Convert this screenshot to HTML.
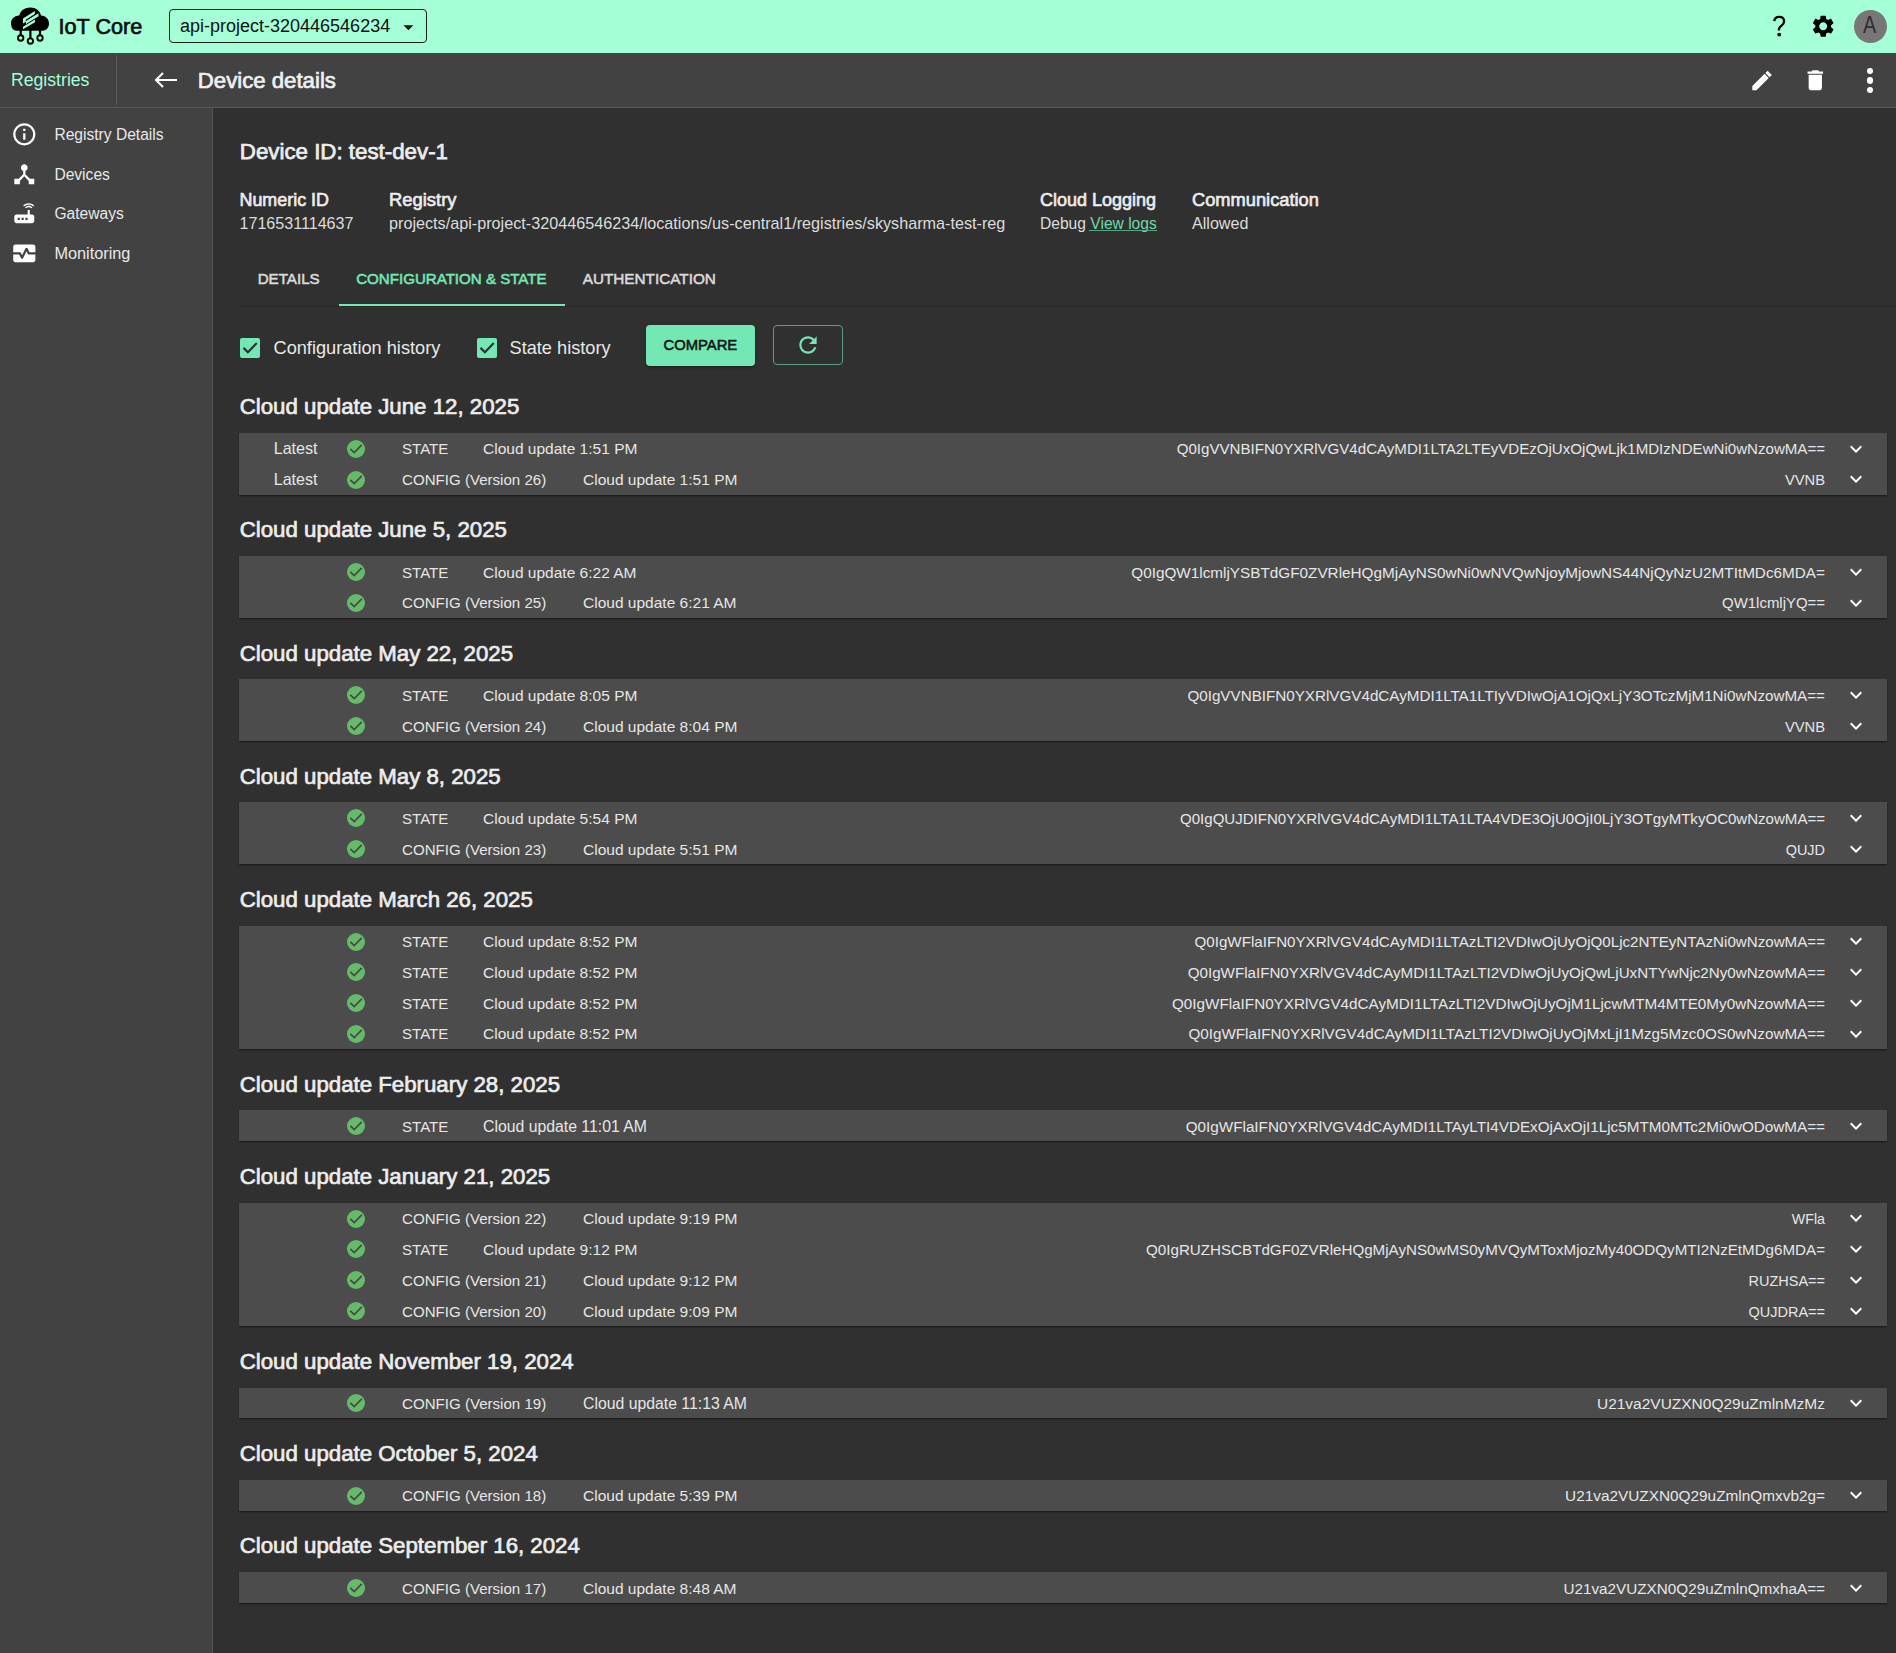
<!DOCTYPE html>
<html><head><meta charset="utf-8"><style>
html,body{margin:0;padding:0;}
body{width:1896px;height:1653px;overflow:hidden;background:#303030;position:relative;font-family:"Liberation Sans",sans-serif;}
.t{position:absolute;white-space:nowrap;}
.panel{position:absolute;left:239px;width:1648px;background:#4c4c4c;box-shadow:0 2px 1px -1px rgba(0,0,0,.2),0 1px 1px 0 rgba(0,0,0,.14),0 1px 3px 0 rgba(0,0,0,.12);}
.ok{position:absolute;left:347px;width:18px;height:18px;border-radius:50%;background:#66bb6a;}
.ok svg{display:block}
.chev{position:absolute;left:1844px;}
</style></head><body>
<div style="position:absolute;left:0;top:0;width:1896px;height:53px;background:#a5ffd7"></div><svg style="position:absolute;left:0;top:0" width="60" height="52" viewBox="0 0 60 52">
<path d="M16.5 30.7 C12.5 30.7 11 27 11 23.6 C11 19.3 14 15.6 19.3 15.6 C20.5 10.5 25 7.6 30.4 7.6 C36 7.6 40 11 41 15.6 C46 15.6 49 19.5 49 23.6 C49 27.5 46.5 30.7 42.7 30.7 Z" fill="#000"/>
<path d="M23 18.5 L34.8 11 L34.8 14 L25.8 19.8 L25.8 22 L23 23.5 Z M26 21 L38.5 13.2 L38.5 16.3 L26 24 Z M23 26.8 L35 19.5 L35 22.3 L23 29.2 Z" fill="#a5ffd7"/>
<path d="M20.7 30 V35 M30.4 30 V38 M40 30 V35" stroke="#000" stroke-width="2.2"/>
<circle cx="20.7" cy="38" r="2.7" fill="none" stroke="#000" stroke-width="1.9"/>
<circle cx="30.4" cy="41.1" r="2.7" fill="none" stroke="#000" stroke-width="1.9"/>
<circle cx="40" cy="38" r="2.7" fill="none" stroke="#000" stroke-width="1.9"/>
</svg><div class="t" style="left:58.6px;top:14px;font-size:21.6px;line-height:25px;font-weight:400;color:#111;-webkit-text-stroke:0.7px currentColor;">IoT Core</div>
<div style="position:absolute;left:169px;top:9px;width:256px;height:32px;border:1px solid #1d1d1d;border-radius:4px"></div><div class="t" style="left:180px;top:16px;font-size:18px;line-height:20px;font-weight:400;color:#111;">api-project-320446546234</div>
<svg style="position:absolute;left:403px;top:25px" width="11" height="6" viewBox="0 0 11 6"><path d="M0.5 0.3 L10.3 0.3 L5.4 5.2Z" fill="#111"/></svg><svg style="position:absolute;left:1766px;top:10px" width="26" height="30" viewBox="0 0 26 30"><path d="M8.2 11.2 C8.6 8.4 10.6 6.8 13.3 6.8 C16.2 6.8 18.1 8.7 18.1 11.4 C18.1 14 16 15.3 14.4 16.7 C13 17.9 12.8 19 12.8 20.5" fill="none" stroke="#000" stroke-width="2.3"/><circle cx="13.2" cy="24.6" r="1.9" fill="#000"/></svg><svg style="position:absolute;left:1810px;top:13px" width="26.4" height="26.4" viewBox="0 0 24 24"><path d="M19.14 12.94c.04-.3.06-.61.06-.94 0-.32-.02-.64-.07-.94l2.03-1.58c.18-.14.23-.41.12-.61l-1.92-3.32c-.12-.22-.37-.29-.59-.22l-2.39.96c-.5-.38-1.03-.7-1.62-.94l-.36-2.54c-.04-.24-.24-.41-.48-.41h-3.84c-.24 0-.43.17-.47.41l-.36 2.54c-.59.24-1.13.57-1.62.94l-2.39-.96c-.22-.08-.47 0-.59.22L2.74 8.87c-.12.21-.08.47.12.61l2.03 1.58c-.05.3-.09.63-.09.94s.02.64.07.94l-2.03 1.58c-.18.14-.23.41-.12.61l1.92 3.32c.12.22.37.29.59.22l2.39-.96c.5.38 1.03.7 1.62.94l.36 2.54c.05.24.24.41.48.41h3.84c.24 0 .44-.17.47-.41l.36-2.54c.59-.24 1.13-.56 1.62-.94l2.39.96c.22.08.47 0 .59-.22l1.92-3.32c.12-.22.07-.47-.12-.61l-2.01-1.58zM12 15.6c-1.98 0-3.6-1.62-3.6-3.6s1.62-3.6 3.6-3.6 3.6 1.62 3.6 3.6-1.62 3.6-3.6 3.6z" fill="#000"/></svg><div style="position:absolute;left:1854px;top:10px;width:33px;height:33px;border-radius:50%;background:#777"></div><div class="t" style="left:1862.3px;top:12px;font-size:23.0px;line-height:26px;font-weight:400;color:#2e2e2e;transform:scaleX(0.86);transform-origin:7.5px 0;">A</div>
<div style="position:absolute;left:0;top:53px;width:1896px;height:54px;background:#424242;border-bottom:1px solid #5a5a5a"></div><div class="t" style="left:11px;top:70px;font-size:17.65px;line-height:20px;font-weight:400;color:#a5ffd7;">Registries</div>
<div style="position:absolute;left:116px;top:55px;width:1px;height:50px;background:#5a5a5a"></div><svg style="position:absolute;left:150px;top:66px" width="32" height="28" viewBox="0 0 32 28"><path d="M27 14 H6.5 M13 7 L6 14 L13 21" fill="none" stroke="#fff" stroke-width="2.1"/></svg><div class="t" style="left:197.8px;top:68px;font-size:22.2px;line-height:25px;font-weight:400;color:#efefef;-webkit-text-stroke:0.7px currentColor;">Device details</div>
<svg style="position:absolute;left:1748.6px;top:66.6px" width="26.6" height="26.6" viewBox="0 0 24 24"><path d="M3 17.25V21h3.75L17.81 9.94l-3.75-3.75L3 17.25z M18.6 9.2 L14.8 5.4 L16.8 3.4 L20.6 7.2Z" fill="#fff"/></svg><svg style="position:absolute;left:1801.8px;top:66.6px" width="26.6" height="26.6" viewBox="0 0 24 24"><path d="M6 19c0 1.1.9 2 2 2h8c1.1 0 2-.9 2-2V7H6v12zM19 4h-3.5l-1-1h-5l-1 1H5v2h14V4z" fill="#fff"/></svg><div style="position:absolute;left:1866.9px;top:67.5px;width:6.6px;height:6.6px;border-radius:50%;background:#fff"></div><div style="position:absolute;left:1866.9px;top:77.0px;width:6.6px;height:6.6px;border-radius:50%;background:#fff"></div><div style="position:absolute;left:1866.9px;top:86.5px;width:6.6px;height:6.6px;border-radius:50%;background:#fff"></div><div style="position:absolute;left:0;top:108px;width:212px;height:1545px;background:#424242;border-right:1px solid #555"></div><svg style="position:absolute;left:10.7px;top:120.9px" width="26.6" height="26.6" viewBox="0 0 24 24"><path d="M11 7h2v2h-2zm0 4h2v6h-2zm1-9C6.48 2 2 6.48 2 12s4.48 10 10 10 10-4.48 10-10S17.52 2 12 2zm0 18c-4.41 0-8-3.59-8-8s3.59-8 8-8 8 3.59 8 8-3.59 8-8 8z" fill="#fff"/></svg><div class="t" style="left:54.4px;top:126px;font-size:15.6px;line-height:17px;font-weight:400;color:#e8e8e8;">Registry Details</div>
<svg style="position:absolute;left:10.7px;top:160.7px" width="26.6" height="26.6" viewBox="0 0 24 24"><path d="M17 16l-4-4V8.82C14.16 8.4 15 7.3 15 6c0-1.66-1.34-3-3-3S9 4.34 9 6c0 1.3.84 2.4 2 2.82V12l-4 4H3v5h5v-3.05l4-4.2 4 4.2V21h5v-5h-4z" fill="#fff"/></svg><div class="t" style="left:54.4px;top:166px;font-size:15.6px;line-height:17px;font-weight:400;color:#e8e8e8;">Devices</div>
<svg style="position:absolute;left:10.7px;top:199.6px" width="26.6" height="26.6" viewBox="0 0 24 24"><path d="M20.2 5.9l.8-.8C19.6 3.7 17.8 3 16 3s-3.6.7-5 2.1l.8.8C13 4.8 14.5 4.2 16 4.2s3 .6 4.2 1.7zm-.9.8c-.9-.9-2.1-1.4-3.3-1.4s-2.4.5-3.3 1.4l.8.8c.7-.7 1.6-1 2.5-1 .9 0 1.8.3 2.5 1l.8-.8zM19 13h-2V9h-2v4H5c-1.1 0-2 .9-2 2v4c0 1.1.9 2 2 2h14c1.1 0 2-.9 2-2v-4c0-1.1-.9-2-2-2zM8 18H6v-2h2v2zm3.5 0h-2v-2h2v2zm3.5 0h-2v-2h2v2z" fill="#fff"/></svg><div class="t" style="left:54.4px;top:205px;font-size:15.6px;line-height:17px;font-weight:400;color:#e8e8e8;">Gateways</div>
<svg style="position:absolute;left:10.7px;top:239.7px" width="26.6" height="26.6" viewBox="0 0 24 24"><path d="M15.11 12.45 14 10.24l-3.11 6.21c-.16.34-.51.55-.89.55s-.73-.21-.89-.55L7.38 13H2v5c0 1.1.9 2 2 2h16c1.1 0 2-.9 2-2v-5h-6c-.38 0-.73-.21-.89-.55zM20 4H4c-1.1 0-2 .9-2 2v5h6c.38 0 .73.21.89.55L10 13.76l3.11-6.21c.34-.69 1.45-.69 1.79 0L16.62 11H22V6c0-1.1-.9-2-2-2z" fill="#fff"/></svg><div class="t" style="left:54.4px;top:244px;font-size:16.3px;line-height:18px;font-weight:400;color:#e8e8e8;">Monitoring</div>
<div class="t" style="left:239.8px;top:139px;font-size:22.3px;line-height:25px;font-weight:400;color:#ececec;-webkit-text-stroke:0.75px currentColor;">Device ID: test-dev-1</div>
<div class="t" style="left:239.5px;top:190px;font-size:17.9px;line-height:20px;font-weight:400;color:#ececec;-webkit-text-stroke:0.65px currentColor;">Numeric ID</div>
<div class="t" style="left:239.5px;top:214px;font-size:16.1px;line-height:18px;font-weight:400;color:#dcdcdc;">1716531114637</div>
<div class="t" style="left:389px;top:189px;font-size:18.4px;line-height:21px;font-weight:400;color:#ececec;-webkit-text-stroke:0.65px currentColor;">Registry</div>
<div class="t" style="left:389px;top:214px;font-size:16.19px;line-height:18px;font-weight:400;color:#dcdcdc;">projects/api-project-320446546234/locations/us-central1/registries/skysharma-test-reg</div>
<div class="t" style="left:1040px;top:190px;font-size:18.0px;line-height:20px;font-weight:400;color:#ececec;-webkit-text-stroke:0.65px currentColor;">Cloud Logging</div>
<div class="t" style="left:1040px;top:215px;font-size:15.6px;line-height:17px;font-weight:400;color:#dcdcdc;">Debug <span style="color:#6fd8a8">View logs</span></div>
<div class="t" style="left:1192px;top:189px;font-size:18.28px;line-height:21px;font-weight:400;color:#ececec;-webkit-text-stroke:0.65px currentColor;">Communication</div>
<div class="t" style="left:1192px;top:214px;font-size:16.1px;line-height:18px;font-weight:400;color:#dcdcdc;">Allowed</div>
<div style="position:absolute;left:1089px;top:230px;width:68px;height:1px;background:#52a883"></div><div style="position:absolute;left:239px;top:306px;width:1657px;height:1px;background:#2a2a2a"></div><div class="t" style="left:257.7px;top:270px;font-size:15.15px;line-height:17px;font-weight:400;color:#d9d9d9;-webkit-text-stroke:0.55px currentColor;">DETAILS</div>
<div class="t" style="left:356.2px;top:270px;font-size:15.1px;line-height:17px;font-weight:400;color:#73e7b4;-webkit-text-stroke:0.55px currentColor;">CONFIGURATION &amp; STATE</div>
<div class="t" style="left:582.7px;top:270px;font-size:15.3px;line-height:17px;font-weight:400;color:#d9d9d9;-webkit-text-stroke:0.55px currentColor;">AUTHENTICATION</div>
<div style="position:absolute;left:338.5px;top:304px;width:226.5px;height:2px;background:#73e7b4"></div><div style="position:absolute;left:240px;top:338px;width:20px;height:20px;border-radius:2px;background:#73e7b4"></div><svg style="position:absolute;left:240px;top:338px" width="20" height="20" viewBox="0 0 20 20"><path d="M3.5 9.9 L7.9 14.2 L16.8 5.1" fill="none" stroke="#303030" stroke-width="2.2"/></svg><div style="position:absolute;left:477px;top:338px;width:20px;height:20px;border-radius:2px;background:#73e7b4"></div><svg style="position:absolute;left:477px;top:338px" width="20" height="20" viewBox="0 0 20 20"><path d="M3.5 9.9 L7.9 14.2 L16.8 5.1" fill="none" stroke="#303030" stroke-width="2.2"/></svg><div class="t" style="left:273.5px;top:338px;font-size:18.2px;line-height:20px;font-weight:400;color:#e8e8e8;">Configuration history</div>
<div class="t" style="left:509.5px;top:338px;font-size:18.2px;line-height:20px;font-weight:400;color:#e8e8e8;">State history</div>
<div style="position:absolute;left:646px;top:325px;width:109px;height:41px;border-radius:4px;background:#73e7b4;box-shadow:0 2px 2px rgba(0,0,0,.25)"></div><div class="t" style="left:663.5px;top:337px;font-size:14.8px;line-height:16px;font-weight:400;color:#141414;-webkit-text-stroke:0.55px currentColor;">COMPARE</div>
<div style="position:absolute;left:773px;top:325px;width:68px;height:38px;border-radius:4px;border:1px solid #5c9e80"></div><svg style="position:absolute;left:795.2px;top:332px" width="26" height="26" viewBox="0 0 24 24"><path d="M17.65 6.35C16.2 4.9 14.21 4 12 4c-4.42 0-7.99 3.58-7.99 8s3.57 8 7.99 8c3.73 0 6.84-2.55 7.73-6h-2.08c-.82 2.33-3.04 4-5.65 4-3.31 0-6-2.69-6-6s2.69-6 6-6c1.66 0 3.14.69 4.22 1.78L13 11h7V4l-2.35 2.35z" fill="#73e7b4"/></svg><div class="t" style="left:239.7px;top:394px;font-size:22.25px;line-height:25px;font-weight:400;color:#ececec;-webkit-text-stroke:0.7px currentColor;">Cloud update June 12, 2025</div>
<div class="panel" style="top:433.00px;height:61.60px"></div><div class="t" style="left:273.7px;top:439px;font-size:16.1px;line-height:18px;font-weight:400;color:#e6e6e6;">Latest</div>
<div class="ok" style="top:439.90px"><svg width="18" height="18" viewBox="0 0 18 18"><path d="M3.3 8.9 L7.2 12.5 L14.8 4.9" fill="none" stroke="#474747" stroke-width="1.7"/></svg></div><div class="t" style="left:402px;top:440px;font-size:15.1px;line-height:17px;font-weight:400;color:#e6e6e6;">STATE</div>
<div class="t" style="left:483px;top:440px;font-size:15.52px;line-height:17px;font-weight:400;color:#e6e6e6;">Cloud update 1:51 PM</div>
<div class="t" style="right:71px;text-align:right;top:440px;font-size:15.089px;line-height:17px;font-weight:400;color:#e6e6e6;">Q0IgVVNBIFN0YXRlVGV4dCAyMDI1LTA2LTEyVDEzOjUxOjQwLjk1MDIzNDEwNi0wNzowMA==</div>
<svg class="chev" style="top:436.60px" width="24" height="24" viewBox="0 0 24 24"><path d="M16.59 8.59L12 13.17 7.41 8.59 6 10l6 6 6-6z" fill="#fff"/></svg><div class="t" style="left:273.7px;top:470px;font-size:16.1px;line-height:18px;font-weight:400;color:#e6e6e6;">Latest</div>
<div class="ok" style="top:470.70px"><svg width="18" height="18" viewBox="0 0 18 18"><path d="M3.3 8.9 L7.2 12.5 L14.8 4.9" fill="none" stroke="#474747" stroke-width="1.7"/></svg></div><div class="t" style="left:402px;top:471px;font-size:15.1px;line-height:17px;font-weight:400;color:#e6e6e6;">CONFIG (Version 26)</div>
<div class="t" style="left:583px;top:471px;font-size:15.52px;line-height:17px;font-weight:400;color:#e6e6e6;">Cloud update 1:51 PM</div>
<div class="t" style="right:71px;text-align:right;top:472px;font-size:14.739px;line-height:16px;font-weight:400;color:#e6e6e6;">VVNB</div>
<svg class="chev" style="top:467.40px" width="24" height="24" viewBox="0 0 24 24"><path d="M16.59 8.59L12 13.17 7.41 8.59 6 10l6 6 6-6z" fill="#fff"/></svg><div class="t" style="left:239.7px;top:517px;font-size:22.25px;line-height:25px;font-weight:400;color:#ececec;-webkit-text-stroke:0.7px currentColor;">Cloud update June 5, 2025</div>
<div class="panel" style="top:556.16px;height:61.60px"></div><div class="ok" style="top:563.06px"><svg width="18" height="18" viewBox="0 0 18 18"><path d="M3.3 8.9 L7.2 12.5 L14.8 4.9" fill="none" stroke="#474747" stroke-width="1.7"/></svg></div><div class="t" style="left:402px;top:564px;font-size:15.1px;line-height:17px;font-weight:400;color:#e6e6e6;">STATE</div>
<div class="t" style="left:483px;top:564px;font-size:15.52px;line-height:17px;font-weight:400;color:#e6e6e6;">Cloud update 6:22 AM</div>
<div class="t" style="right:71px;text-align:right;top:564px;font-size:15.315px;line-height:17px;font-weight:400;color:#e6e6e6;">Q0IgQW1lcmljYSBTdGF0ZVRleHQgMjAyNS0wNi0wNVQwNjoyMjowNS44NjQyNzU2MTItMDc6MDA=</div>
<svg class="chev" style="top:559.76px" width="24" height="24" viewBox="0 0 24 24"><path d="M16.59 8.59L12 13.17 7.41 8.59 6 10l6 6 6-6z" fill="#fff"/></svg><div class="ok" style="top:593.86px"><svg width="18" height="18" viewBox="0 0 18 18"><path d="M3.3 8.9 L7.2 12.5 L14.8 4.9" fill="none" stroke="#474747" stroke-width="1.7"/></svg></div><div class="t" style="left:402px;top:594px;font-size:15.1px;line-height:17px;font-weight:400;color:#e6e6e6;">CONFIG (Version 25)</div>
<div class="t" style="left:583px;top:594px;font-size:15.52px;line-height:17px;font-weight:400;color:#e6e6e6;">Cloud update 6:21 AM</div>
<div class="t" style="right:71px;text-align:right;top:594px;font-size:14.954px;line-height:17px;font-weight:400;color:#e6e6e6;">QW1lcmljYQ==</div>
<svg class="chev" style="top:590.56px" width="24" height="24" viewBox="0 0 24 24"><path d="M16.59 8.59L12 13.17 7.41 8.59 6 10l6 6 6-6z" fill="#fff"/></svg><div class="t" style="left:239.7px;top:641px;font-size:22.25px;line-height:25px;font-weight:400;color:#ececec;-webkit-text-stroke:0.7px currentColor;">Cloud update May 22, 2025</div>
<div class="panel" style="top:679.32px;height:61.60px"></div><div class="ok" style="top:686.22px"><svg width="18" height="18" viewBox="0 0 18 18"><path d="M3.3 8.9 L7.2 12.5 L14.8 4.9" fill="none" stroke="#474747" stroke-width="1.7"/></svg></div><div class="t" style="left:402px;top:687px;font-size:15.1px;line-height:17px;font-weight:400;color:#e6e6e6;">STATE</div>
<div class="t" style="left:483px;top:687px;font-size:15.52px;line-height:17px;font-weight:400;color:#e6e6e6;">Cloud update 8:05 PM</div>
<div class="t" style="right:71px;text-align:right;top:687px;font-size:15.218px;line-height:17px;font-weight:400;color:#e6e6e6;">Q0IgVVNBIFN0YXRlVGV4dCAyMDI1LTA1LTIyVDIwOjA1OjQxLjY3OTczMjM1Ni0wNzowMA==</div>
<svg class="chev" style="top:682.92px" width="24" height="24" viewBox="0 0 24 24"><path d="M16.59 8.59L12 13.17 7.41 8.59 6 10l6 6 6-6z" fill="#fff"/></svg><div class="ok" style="top:717.02px"><svg width="18" height="18" viewBox="0 0 18 18"><path d="M3.3 8.9 L7.2 12.5 L14.8 4.9" fill="none" stroke="#474747" stroke-width="1.7"/></svg></div><div class="t" style="left:402px;top:718px;font-size:15.1px;line-height:17px;font-weight:400;color:#e6e6e6;">CONFIG (Version 24)</div>
<div class="t" style="left:583px;top:718px;font-size:15.52px;line-height:17px;font-weight:400;color:#e6e6e6;">Cloud update 8:04 PM</div>
<div class="t" style="right:71px;text-align:right;top:719px;font-size:14.739px;line-height:16px;font-weight:400;color:#e6e6e6;">VVNB</div>
<svg class="chev" style="top:713.72px" width="24" height="24" viewBox="0 0 24 24"><path d="M16.59 8.59L12 13.17 7.41 8.59 6 10l6 6 6-6z" fill="#fff"/></svg><div class="t" style="left:239.7px;top:764px;font-size:22.25px;line-height:25px;font-weight:400;color:#ececec;-webkit-text-stroke:0.7px currentColor;">Cloud update May 8, 2025</div>
<div class="panel" style="top:802.48px;height:61.60px"></div><div class="ok" style="top:809.38px"><svg width="18" height="18" viewBox="0 0 18 18"><path d="M3.3 8.9 L7.2 12.5 L14.8 4.9" fill="none" stroke="#474747" stroke-width="1.7"/></svg></div><div class="t" style="left:402px;top:810px;font-size:15.1px;line-height:17px;font-weight:400;color:#e6e6e6;">STATE</div>
<div class="t" style="left:483px;top:810px;font-size:15.52px;line-height:17px;font-weight:400;color:#e6e6e6;">Cloud update 5:54 PM</div>
<div class="t" style="right:71px;text-align:right;top:810px;font-size:15.051px;line-height:17px;font-weight:400;color:#e6e6e6;">Q0IgQUJDIFN0YXRlVGV4dCAyMDI1LTA1LTA4VDE3OjU0OjI0LjY3OTgyMTkyOC0wNzowMA==</div>
<svg class="chev" style="top:806.08px" width="24" height="24" viewBox="0 0 24 24"><path d="M16.59 8.59L12 13.17 7.41 8.59 6 10l6 6 6-6z" fill="#fff"/></svg><div class="ok" style="top:840.18px"><svg width="18" height="18" viewBox="0 0 18 18"><path d="M3.3 8.9 L7.2 12.5 L14.8 4.9" fill="none" stroke="#474747" stroke-width="1.7"/></svg></div><div class="t" style="left:402px;top:841px;font-size:15.1px;line-height:17px;font-weight:400;color:#e6e6e6;">CONFIG (Version 23)</div>
<div class="t" style="left:583px;top:841px;font-size:15.52px;line-height:17px;font-weight:400;color:#e6e6e6;">Cloud update 5:51 PM</div>
<div class="t" style="right:71px;text-align:right;top:842px;font-size:14.445px;line-height:16px;font-weight:400;color:#e6e6e6;">QUJD</div>
<svg class="chev" style="top:836.88px" width="24" height="24" viewBox="0 0 24 24"><path d="M16.59 8.59L12 13.17 7.41 8.59 6 10l6 6 6-6z" fill="#fff"/></svg><div class="t" style="left:239.7px;top:887px;font-size:22.25px;line-height:25px;font-weight:400;color:#ececec;-webkit-text-stroke:0.7px currentColor;">Cloud update March 26, 2025</div>
<div class="panel" style="top:925.64px;height:123.20px"></div><div class="ok" style="top:932.54px"><svg width="18" height="18" viewBox="0 0 18 18"><path d="M3.3 8.9 L7.2 12.5 L14.8 4.9" fill="none" stroke="#474747" stroke-width="1.7"/></svg></div><div class="t" style="left:402px;top:933px;font-size:15.1px;line-height:17px;font-weight:400;color:#e6e6e6;">STATE</div>
<div class="t" style="left:483px;top:933px;font-size:15.52px;line-height:17px;font-weight:400;color:#e6e6e6;">Cloud update 8:52 PM</div>
<div class="t" style="right:71px;text-align:right;top:933px;font-size:15.152px;line-height:17px;font-weight:400;color:#e6e6e6;">Q0IgWFlaIFN0YXRlVGV4dCAyMDI1LTAzLTI2VDIwOjUyOjQ0Ljc2NTEyNTAzNi0wNzowMA==</div>
<svg class="chev" style="top:929.24px" width="24" height="24" viewBox="0 0 24 24"><path d="M16.59 8.59L12 13.17 7.41 8.59 6 10l6 6 6-6z" fill="#fff"/></svg><div class="ok" style="top:963.34px"><svg width="18" height="18" viewBox="0 0 18 18"><path d="M3.3 8.9 L7.2 12.5 L14.8 4.9" fill="none" stroke="#474747" stroke-width="1.7"/></svg></div><div class="t" style="left:402px;top:964px;font-size:15.1px;line-height:17px;font-weight:400;color:#e6e6e6;">STATE</div>
<div class="t" style="left:483px;top:964px;font-size:15.52px;line-height:17px;font-weight:400;color:#e6e6e6;">Cloud update 8:52 PM</div>
<div class="t" style="right:71px;text-align:right;top:964px;font-size:15.168px;line-height:17px;font-weight:400;color:#e6e6e6;">Q0IgWFlaIFN0YXRlVGV4dCAyMDI1LTAzLTI2VDIwOjUyOjQwLjUxNTYwNjc2Ny0wNzowMA==</div>
<svg class="chev" style="top:960.04px" width="24" height="24" viewBox="0 0 24 24"><path d="M16.59 8.59L12 13.17 7.41 8.59 6 10l6 6 6-6z" fill="#fff"/></svg><div class="ok" style="top:994.14px"><svg width="18" height="18" viewBox="0 0 18 18"><path d="M3.3 8.9 L7.2 12.5 L14.8 4.9" fill="none" stroke="#474747" stroke-width="1.7"/></svg></div><div class="t" style="left:402px;top:995px;font-size:15.1px;line-height:17px;font-weight:400;color:#e6e6e6;">STATE</div>
<div class="t" style="left:483px;top:995px;font-size:15.52px;line-height:17px;font-weight:400;color:#e6e6e6;">Cloud update 8:52 PM</div>
<div class="t" style="right:71px;text-align:right;top:995px;font-size:15.269px;line-height:17px;font-weight:400;color:#e6e6e6;">Q0IgWFlaIFN0YXRlVGV4dCAyMDI1LTAzLTI2VDIwOjUyOjM1LjcwMTM4MTE0My0wNzowMA==</div>
<svg class="chev" style="top:990.84px" width="24" height="24" viewBox="0 0 24 24"><path d="M16.59 8.59L12 13.17 7.41 8.59 6 10l6 6 6-6z" fill="#fff"/></svg><div class="ok" style="top:1024.94px"><svg width="18" height="18" viewBox="0 0 18 18"><path d="M3.3 8.9 L7.2 12.5 L14.8 4.9" fill="none" stroke="#474747" stroke-width="1.7"/></svg></div><div class="t" style="left:402px;top:1025px;font-size:15.1px;line-height:17px;font-weight:400;color:#e6e6e6;">STATE</div>
<div class="t" style="left:483px;top:1025px;font-size:15.52px;line-height:17px;font-weight:400;color:#e6e6e6;">Cloud update 8:52 PM</div>
<div class="t" style="right:71px;text-align:right;top:1025px;font-size:15.225px;line-height:17px;font-weight:400;color:#e6e6e6;">Q0IgWFlaIFN0YXRlVGV4dCAyMDI1LTAzLTI2VDIwOjUyOjMxLjI1Mzg5Mzc0OS0wNzowMA==</div>
<svg class="chev" style="top:1021.64px" width="24" height="24" viewBox="0 0 24 24"><path d="M16.59 8.59L12 13.17 7.41 8.59 6 10l6 6 6-6z" fill="#fff"/></svg><div class="t" style="left:239.7px;top:1072px;font-size:22.25px;line-height:25px;font-weight:400;color:#ececec;-webkit-text-stroke:0.7px currentColor;">Cloud update February 28, 2025</div>
<div class="panel" style="top:1110.40px;height:30.80px"></div><div class="ok" style="top:1117.30px"><svg width="18" height="18" viewBox="0 0 18 18"><path d="M3.3 8.9 L7.2 12.5 L14.8 4.9" fill="none" stroke="#474747" stroke-width="1.7"/></svg></div><div class="t" style="left:402px;top:1118px;font-size:15.1px;line-height:17px;font-weight:400;color:#e6e6e6;">STATE</div>
<div class="t" style="left:483px;top:1118px;font-size:15.8px;line-height:17px;font-weight:400;color:#e6e6e6;">Cloud update 11:01 AM</div>
<div class="t" style="right:71px;text-align:right;top:1118px;font-size:15.256px;line-height:17px;font-weight:400;color:#e6e6e6;">Q0IgWFlaIFN0YXRlVGV4dCAyMDI1LTAyLTI4VDExOjAxOjI1Ljc5MTM0MTc2Mi0wODowMA==</div>
<svg class="chev" style="top:1114.00px" width="24" height="24" viewBox="0 0 24 24"><path d="M16.59 8.59L12 13.17 7.41 8.59 6 10l6 6 6-6z" fill="#fff"/></svg><div class="t" style="left:239.7px;top:1164px;font-size:22.25px;line-height:25px;font-weight:400;color:#ececec;-webkit-text-stroke:0.7px currentColor;">Cloud update January 21, 2025</div>
<div class="panel" style="top:1202.76px;height:123.20px"></div><div class="ok" style="top:1209.66px"><svg width="18" height="18" viewBox="0 0 18 18"><path d="M3.3 8.9 L7.2 12.5 L14.8 4.9" fill="none" stroke="#474747" stroke-width="1.7"/></svg></div><div class="t" style="left:402px;top:1210px;font-size:15.1px;line-height:17px;font-weight:400;color:#e6e6e6;">CONFIG (Version 22)</div>
<div class="t" style="left:583px;top:1210px;font-size:15.52px;line-height:17px;font-weight:400;color:#e6e6e6;">Cloud update 9:19 PM</div>
<div class="t" style="right:71px;text-align:right;top:1211px;font-size:14.233px;line-height:16px;font-weight:400;color:#e6e6e6;">WFla</div>
<svg class="chev" style="top:1206.36px" width="24" height="24" viewBox="0 0 24 24"><path d="M16.59 8.59L12 13.17 7.41 8.59 6 10l6 6 6-6z" fill="#fff"/></svg><div class="ok" style="top:1240.46px"><svg width="18" height="18" viewBox="0 0 18 18"><path d="M3.3 8.9 L7.2 12.5 L14.8 4.9" fill="none" stroke="#474747" stroke-width="1.7"/></svg></div><div class="t" style="left:402px;top:1241px;font-size:15.1px;line-height:17px;font-weight:400;color:#e6e6e6;">STATE</div>
<div class="t" style="left:483px;top:1241px;font-size:15.52px;line-height:17px;font-weight:400;color:#e6e6e6;">Cloud update 9:12 PM</div>
<div class="t" style="right:71px;text-align:right;top:1241px;font-size:15.168px;line-height:17px;font-weight:400;color:#e6e6e6;">Q0IgRUZHSCBTdGF0ZVRleHQgMjAyNS0wMS0yMVQyMToxMjozMy40ODQyMTI2NzEtMDg6MDA=</div>
<svg class="chev" style="top:1237.16px" width="24" height="24" viewBox="0 0 24 24"><path d="M16.59 8.59L12 13.17 7.41 8.59 6 10l6 6 6-6z" fill="#fff"/></svg><div class="ok" style="top:1271.26px"><svg width="18" height="18" viewBox="0 0 18 18"><path d="M3.3 8.9 L7.2 12.5 L14.8 4.9" fill="none" stroke="#474747" stroke-width="1.7"/></svg></div><div class="t" style="left:402px;top:1272px;font-size:15.1px;line-height:17px;font-weight:400;color:#e6e6e6;">CONFIG (Version 21)</div>
<div class="t" style="left:583px;top:1272px;font-size:15.52px;line-height:17px;font-weight:400;color:#e6e6e6;">Cloud update 9:12 PM</div>
<div class="t" style="right:71px;text-align:right;top:1273px;font-size:14.498px;line-height:16px;font-weight:400;color:#e6e6e6;">RUZHSA==</div>
<svg class="chev" style="top:1267.96px" width="24" height="24" viewBox="0 0 24 24"><path d="M16.59 8.59L12 13.17 7.41 8.59 6 10l6 6 6-6z" fill="#fff"/></svg><div class="ok" style="top:1302.06px"><svg width="18" height="18" viewBox="0 0 18 18"><path d="M3.3 8.9 L7.2 12.5 L14.8 4.9" fill="none" stroke="#474747" stroke-width="1.7"/></svg></div><div class="t" style="left:402px;top:1303px;font-size:15.1px;line-height:17px;font-weight:400;color:#e6e6e6;">CONFIG (Version 20)</div>
<div class="t" style="left:583px;top:1303px;font-size:15.52px;line-height:17px;font-weight:400;color:#e6e6e6;">Cloud update 9:09 PM</div>
<div class="t" style="right:71px;text-align:right;top:1304px;font-size:14.498px;line-height:16px;font-weight:400;color:#e6e6e6;">QUJDRA==</div>
<svg class="chev" style="top:1298.76px" width="24" height="24" viewBox="0 0 24 24"><path d="M16.59 8.59L12 13.17 7.41 8.59 6 10l6 6 6-6z" fill="#fff"/></svg><div class="t" style="left:239.7px;top:1349px;font-size:22.25px;line-height:25px;font-weight:400;color:#ececec;-webkit-text-stroke:0.7px currentColor;">Cloud update November 19, 2024</div>
<div class="panel" style="top:1387.52px;height:30.80px"></div><div class="ok" style="top:1394.42px"><svg width="18" height="18" viewBox="0 0 18 18"><path d="M3.3 8.9 L7.2 12.5 L14.8 4.9" fill="none" stroke="#474747" stroke-width="1.7"/></svg></div><div class="t" style="left:402px;top:1395px;font-size:15.1px;line-height:17px;font-weight:400;color:#e6e6e6;">CONFIG (Version 19)</div>
<div class="t" style="left:583px;top:1395px;font-size:15.8px;line-height:17px;font-weight:400;color:#e6e6e6;">Cloud update 11:13 AM</div>
<div class="t" style="right:71px;text-align:right;top:1395px;font-size:15.493px;line-height:17px;font-weight:400;color:#e6e6e6;">U21va2VUZXN0Q29uZmlnMzMz</div>
<svg class="chev" style="top:1391.12px" width="24" height="24" viewBox="0 0 24 24"><path d="M16.59 8.59L12 13.17 7.41 8.59 6 10l6 6 6-6z" fill="#fff"/></svg><div class="t" style="left:239.7px;top:1441px;font-size:22.25px;line-height:25px;font-weight:400;color:#ececec;-webkit-text-stroke:0.7px currentColor;">Cloud update October 5, 2024</div>
<div class="panel" style="top:1479.88px;height:30.80px"></div><div class="ok" style="top:1486.78px"><svg width="18" height="18" viewBox="0 0 18 18"><path d="M3.3 8.9 L7.2 12.5 L14.8 4.9" fill="none" stroke="#474747" stroke-width="1.7"/></svg></div><div class="t" style="left:402px;top:1487px;font-size:15.1px;line-height:17px;font-weight:400;color:#e6e6e6;">CONFIG (Version 18)</div>
<div class="t" style="left:583px;top:1487px;font-size:15.52px;line-height:17px;font-weight:400;color:#e6e6e6;">Cloud update 5:39 PM</div>
<div class="t" style="right:71px;text-align:right;top:1487px;font-size:15.367px;line-height:17px;font-weight:400;color:#e6e6e6;">U21va2VUZXN0Q29uZmlnQmxvb2g=</div>
<svg class="chev" style="top:1483.48px" width="24" height="24" viewBox="0 0 24 24"><path d="M16.59 8.59L12 13.17 7.41 8.59 6 10l6 6 6-6z" fill="#fff"/></svg><div class="t" style="left:239.7px;top:1533px;font-size:22.25px;line-height:25px;font-weight:400;color:#ececec;-webkit-text-stroke:0.7px currentColor;">Cloud update September 16, 2024</div>
<div class="panel" style="top:1572.24px;height:30.80px"></div><div class="ok" style="top:1579.14px"><svg width="18" height="18" viewBox="0 0 18 18"><path d="M3.3 8.9 L7.2 12.5 L14.8 4.9" fill="none" stroke="#474747" stroke-width="1.7"/></svg></div><div class="t" style="left:402px;top:1580px;font-size:15.1px;line-height:17px;font-weight:400;color:#e6e6e6;">CONFIG (Version 17)</div>
<div class="t" style="left:583px;top:1580px;font-size:15.52px;line-height:17px;font-weight:400;color:#e6e6e6;">Cloud update 8:48 AM</div>
<div class="t" style="right:71px;text-align:right;top:1580px;font-size:15.299px;line-height:17px;font-weight:400;color:#e6e6e6;">U21va2VUZXN0Q29uZmlnQmxhaA==</div>
<svg class="chev" style="top:1575.84px" width="24" height="24" viewBox="0 0 24 24"><path d="M16.59 8.59L12 13.17 7.41 8.59 6 10l6 6 6-6z" fill="#fff"/></svg>
</body></html>
